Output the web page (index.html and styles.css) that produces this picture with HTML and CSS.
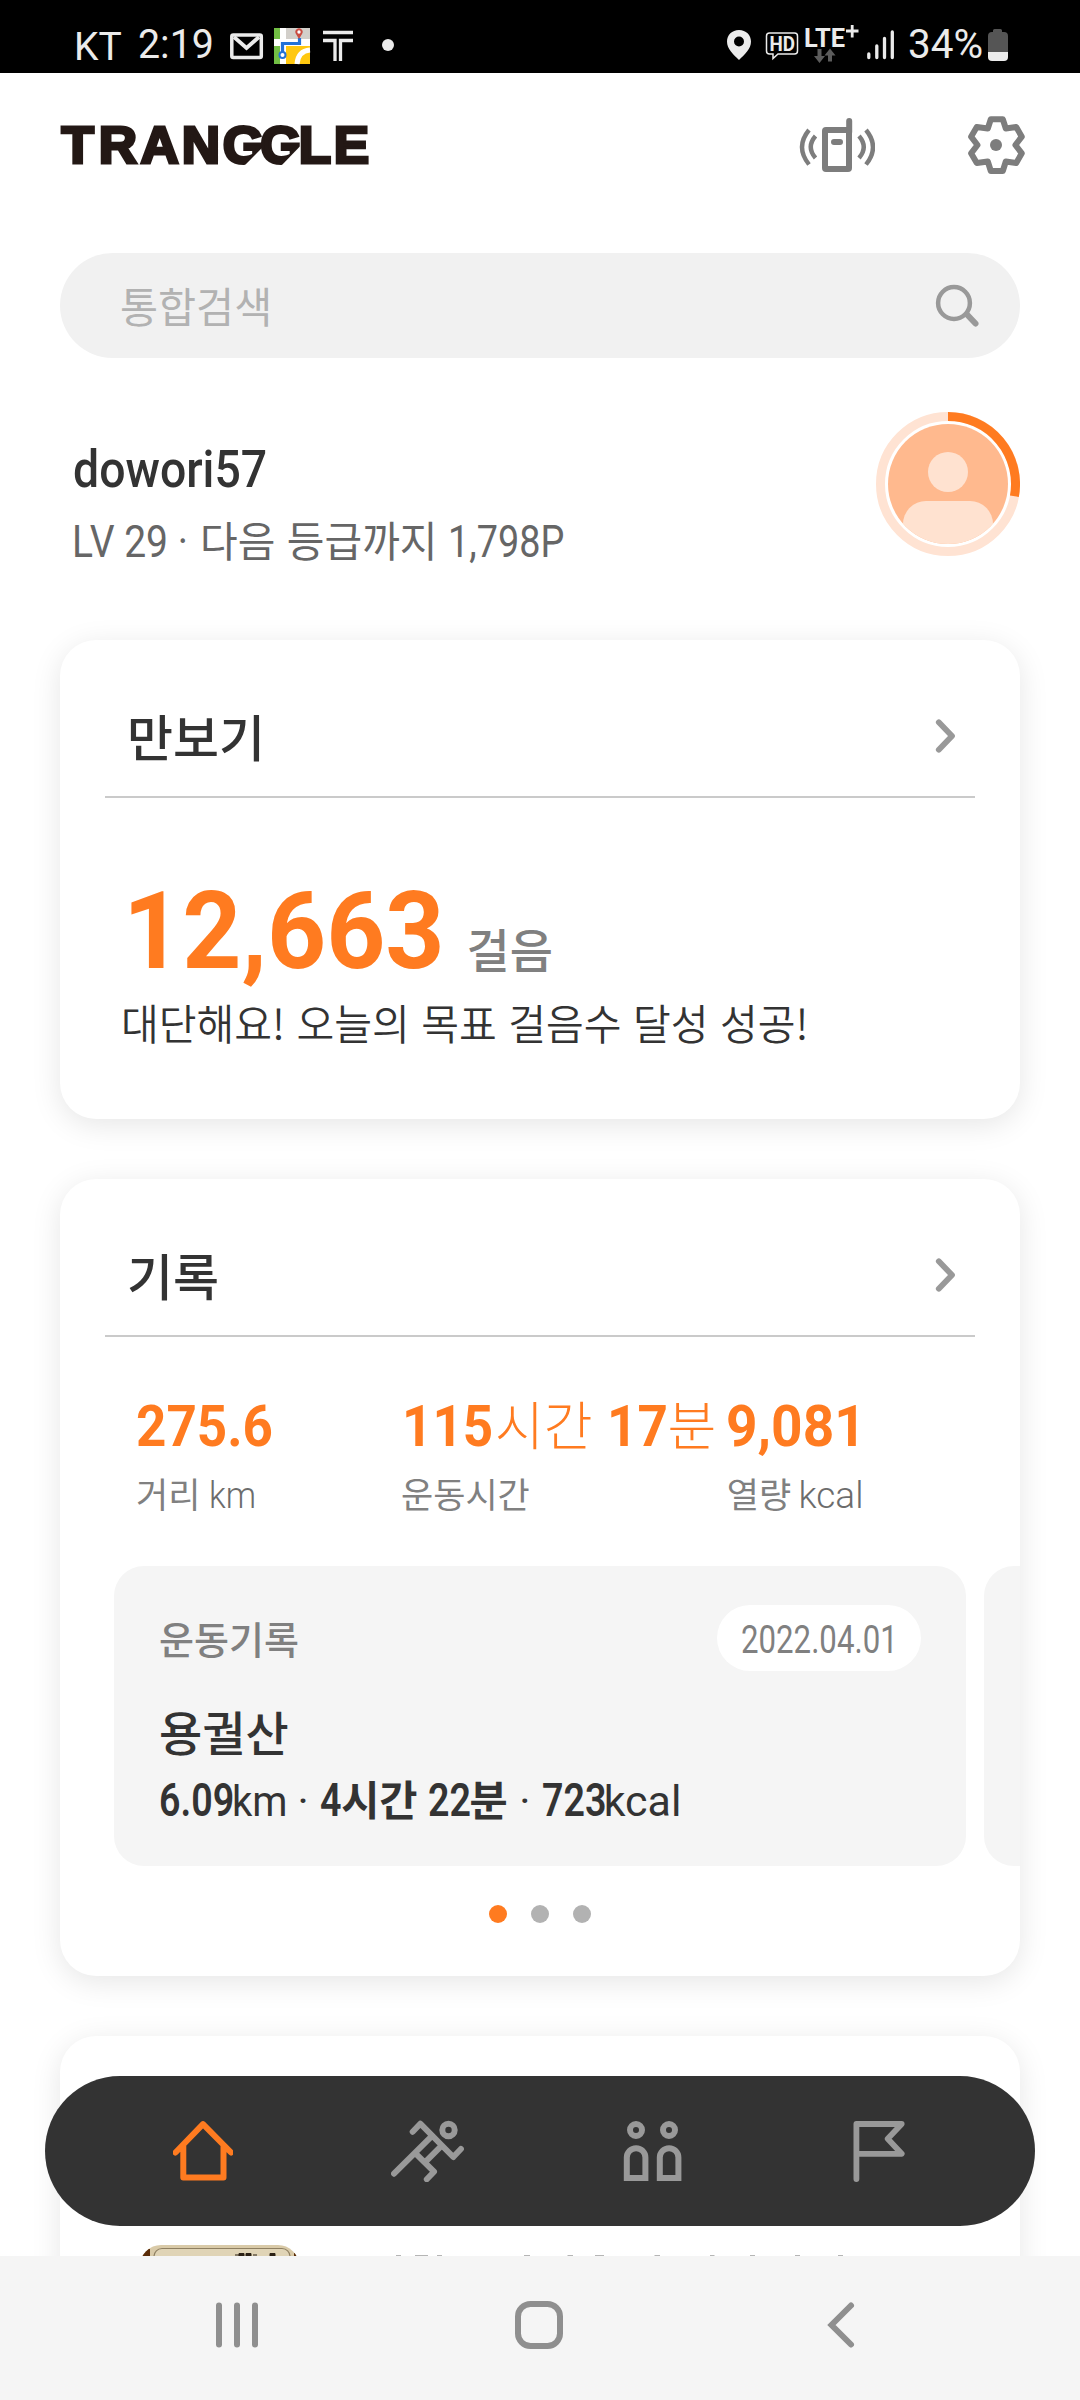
FILE: index.html
```html
<!DOCTYPE html>
<html lang="ko">
<head>
<meta charset="utf-8">
<title>TRANGGLE</title>
<link rel="stylesheet" href="styles.css">
</head>
<body>
<div class="phone">
  <header class="status">
    <span class="carrier">KT</span>
    <span class="clock">2:19</span>
    <svg class="notices" width="168" height="73" viewBox="228 0 168 73">
      <rect x="231.8" y="35" width="29.5" height="22.500" rx="1.500" fill="none" stroke="#ebebeb" stroke-width="3.500"/>
      <path d="M234 37l12.500 11L259 37" fill="none" stroke="#ebebeb" stroke-width="3.800"/>
      <g>
        <rect x="274" y="28" width="36" height="36" fill="#fff"/>
        <rect x="274" y="28" width="6" height="11" fill="#72bf44"/>
        <rect x="274" y="46" width="6" height="18" fill="#72bf44"/>
        <rect x="286" y="28" width="24" height="11" fill="#d2cfca"/>
        <path d="M286 46h24v18h-24z" fill="#ffc810"/>
        <path d="M297 64q1-13 13-14" fill="none" stroke="#fff" stroke-width="5"/>
        <path d="M282.500 54V43.500h17V38" fill="none" stroke="#2272d8" stroke-width="3.200"/>
        <circle cx="282.500" cy="55" r="3" fill="#fff" stroke="#2272d8" stroke-width="2"/>
        <path d="M299 39l-3-5a3.600 3.600 0 1 1 6 0z" fill="#c94b40"/>
        <circle cx="299" cy="32" r="1.700" fill="#fff"/>
      </g>
      <path d="M323 32.500h30M323 40.500h12v20.500M353 40.500h-12.500v20.500" fill="none" stroke="#ebebeb" stroke-width="3.300"/>
      <circle cx="388" cy="45" r="6" fill="#ebebeb"/>
    </svg>
    <svg class="signals" width="184" height="73" viewBox="724 0 184 73">
      <path d="M739 30c-7 0-12 5-12 11.500C727 49 733 54 739 60c6-6 12-11 12-18.500C751 35 746 30 739 30zm0 6.500a5 5 0 1 1 0 10 5 5 0 0 1 0-10z" fill="#ebebeb" fill-rule="evenodd"/>
      <path d="M769.500 33h25a3 3 0 0 1 3 3v15a3 3 0 0 1-3 3h-16.500l-5 4.500v-4.500h-3.500a3 3 0 0 1-3-3V36a3 3 0 0 1 3-3z" fill="none" stroke="#ebebeb" stroke-width="1.500"/>
      <text x="769.500" y="50.500" class="badge-hd" textLength="25.500" lengthAdjust="spacingAndGlyphs">HD</text>
      <text x="804" y="47" class="badge-lte" textLength="41" lengthAdjust="spacingAndGlyphs">LTE</text>
      <path d="M846 31h12.500M852.200 25v12.500" stroke="#ebebeb" stroke-width="2.800"/>
      <path d="M817.500 49h4v7h3.500l-5.500 7-5.500-7h3.500zM828 61.500v-6h-3.500l5.500-7 5.500 7H832v6z" fill="#5c5c5c"/>
      <path d="M868.800 54v3.500M876.800 46v11.500M884.500 38.500v19M892.300 32v25.500" stroke="#ebebeb" stroke-width="3.300" stroke-linecap="round"/>
    </svg>
    <span class="charge">34%</span>
    <svg width="22" height="73" viewBox="987 0 22 73">
      <path d="M993 32v-1.500a1.500 1.500 0 0 1 1.500-1.500h6a1.500 1.500 0 0 1 1.500 1.500V32h2a4 4 0 0 1 4 4v16h-20V36a4 4 0 0 1 4-4z" fill="#555"/>
      <path d="M988 52h20v5a4 4 0 0 1-4 4h-12a4 4 0 0 1-4-4z" fill="#ebebeb"/>
    </svg>
  </header>

  <main class="app">
    <div class="topbar">
      <svg class="logo" width="312" height="54" viewBox="0 0 312 54">
        <g transform="scale(1.04 1)">
          <text y="44.500" x="1.500 37.200 77.500 117">TRAN</text>
          <text y="44.500" x="156.500">G</text>
          <path d="M197 27L177 48h20z" fill="#fff"/>
          <text y="44.500" x="192.500">G</text>
          <path d="M232 27L212.500 48H232z" fill="#fff"/>
          <text y="44.500" x="229.500 263.200">LE</text>
        </g>
      </svg>
      <svg class="radio" width="76" height="58" viewBox="799 116 76 58">
        <g fill="none" stroke="#7d7d7d">
          <rect x="825" y="130" width="24" height="39" rx="1" stroke-width="6"/>
          <path d="M849.200 132v-11M834 142h6" stroke-width="6" stroke-linecap="round"/>
          <path d="M815.500 136q-9.500 11 0 22M859 136q9.500 11 0 22M809 130q-14 17 0 34.500M866 130q14 17 0 34.500" stroke-width="4.400"/>
        </g>
      </svg>
      <svg width="60" height="60" viewBox="966 115 60 60">
        <path d="M990.800 119.300h12l3 9.200 10.400-1.500 5.600 9.700-6.400 8.300 6.400 8.300-5.600 9.700-10.400-1.500-3 9.500h-12l-3-9.500-11 1.500-5.700-9.700 6.400-8.300-6.400-8.300 5.700-9.700 11 1.500z" fill="none" stroke="#7d7d7d" stroke-width="6" stroke-linejoin="round"/>
        <circle cx="996" cy="145" r="6" fill="#7d7d7d"/>
      </svg>
    </div>

    <div class="search">
      <span class="placeholder">통합검색</span>
      <svg width="46" height="46" viewBox="934 281 46 46">
        <g fill="none" stroke="#999" stroke-linecap="round">
          <circle cx="954" cy="302" r="15.900" stroke-width="4.500"/>
          <path d="M967 313.500l8.500 9" stroke-width="6"/>
        </g>
      </svg>
    </div>

    <section class="profile">
      <div>
        <div class="name">dowori57</div>
        <div class="level"><span class="lat">LV 29 ·</span><span class="next">다음 등급까지</span><span class="lat points">1,798P</span></div>
      </div>
      <svg width="144" height="144" viewBox="0 0 144 144">
        <defs><clipPath id="face"><circle cx="72" cy="72" r="60"/></clipPath></defs>
        <circle cx="72" cy="72" r="67.500" fill="none" stroke="#ffe3d3" stroke-width="9"/>
        <path d="M72 4.500A67.500 67.500 0 0 1 138.400 84.200" fill="none" stroke="#ff7b20" stroke-width="9"/>
        <g clip-path="url(#face)">
          <rect width="144" height="144" fill="#ffb98e"/>
          <circle cx="72" cy="60" r="20" fill="#ffe2d0"/>
          <path d="M27 144v-32a23 23 0 0 1 23-23h44a23 23 0 0 1 23 23v32z" fill="#ffe2d0"/>
        </g>
      </svg>
    </section>

    <section class="card card-steps">
      <div class="card-head">
        <h2>만보기</h2>
        <svg width="25" height="40" viewBox="0 -1 25 40"><path d="M5.800 6.300L19 20 5.800 33.700" class="chevron"/></svg>
      </div>
      <div class="steps"><span class="count">12,663</span><span class="unit">걸음</span></div>
      <p class="message">대단해요! 오늘의 목표 걸음수 달성 성공!</p>
    </section>

    <section class="card card-log">
      <div class="card-head">
        <h2>기록</h2>
        <svg width="25" height="40" viewBox="0 -1 25 40"><path d="M5.800 6.300L19 20 5.800 33.700" class="chevron"/></svg>
      </div>
      <div class="totals">
        <b>275.6</b><b>115</b><span>시간</span><b>17</b><span>분</span><b class="wide">9,081</b>
      </div>
      <div class="labels">
        <span>거리</span><span class="lat km">km</span><span>운동시간</span><span>열량</span><span class="lat">kcal</span>
      </div>
      <div class="carousel">
        <article class="record">
          <div class="record-head">
            <span class="kind">운동기록</span>
            <span class="date"><span>2022.04.01</span></span>
          </div>
          <h3>용궐산</h3>
          <div class="detail">
            <b>6.09</b><i class="km">km</i><i class="sep">·</i><b>4</b><strong>시간</strong><b>22</b><strong>분</strong><i class="sep">·</i><b>723</b><i>kcal</i>
          </div>
        </article>
        <article class="record"></article>
      </div>
      <div class="pager"><i class="on"></i><i></i><i></i></div>
    </section>

    <section class="card card-next">
      <svg width="159" height="90" viewBox="0 0 159 90">
        <defs><clipPath id="thumb"><rect width="159" height="90" rx="21"/></clipPath></defs>
        <g clip-path="url(#thumb)">
          <rect width="159" height="90" fill="#d9caa8"/>
          <path d="M0 4h10v86H0zM154 8h5v82h-5z" fill="#5a2c08"/>
          <rect x="14" y="3.500" width="136" height="100" rx="8" fill="#e0d4b6" stroke="#8f8062" stroke-width="1.200"/>
          <path d="M95 10h4M99 8.500h5v3h-5zM106 8.500h5v3h-5zM113 10h4M130 8.500h5v3h-5z" fill="#2b2115" stroke="#2b2115"/>
        </g>
      </svg>
      <svg class="peek" width="460" height="20" viewBox="390 2245 460 20">
        <path d="M396 2255.500h5M415 2255.500h13M437 2255.500h5M524 2255.500h6M567.500 2255.500h5.500M595 2255.500h9M654.500 2255.500h5.500M710 2255.500h4.500M750 2255.500h5M795 2255.500h5M838 2255.500h5" stroke="#b5b5b5" stroke-width="1.200"/>
      </svg>
    </section>

    <nav class="tabs">
      <svg width="60" height="62" viewBox="172.500 2120 60 62">
        <g fill="none" stroke="#ff7b20" stroke-width="6" stroke-linecap="round" stroke-linejoin="round">
          <path d="M175 2152.500l27.500-28.300 28 28.300M182.800 2146v31.500h40.200V2146"/>
        </g>
      </svg>
      <svg width="74" height="62" viewBox="390.500 2120 74 62">
        <g fill="none" stroke="#999" stroke-width="6" stroke-linecap="round" stroke-linejoin="round">
          <path d="M412.200 2131.700l7.600-8 33 33.300 7.600-8M430.800 2136.700l-37.300 37M440.400 2146.300l-15 15M415 2153.300l18.500 18.400-7.200 7.600"/>
          <circle cx="448" cy="2130" r="6.200"/>
        </g>
      </svg>
      <svg width="72" height="62" viewBox="622.500 2120 72 62">
        <g fill="none" stroke="#999" stroke-width="6">
          <circle cx="635.500" cy="2130" r="6"/><circle cx="668.500" cy="2130" r="6"/>
          <path d="M626.300 2178v-20.500a9.300 9.300 0 0 1 18.600 0V2178zM659.300 2178v-20.500a9.300 9.300 0 0 1 18.600 0V2178z"/>
        </g>
      </svg>
      <svg width="54" height="62" viewBox="852.500 2120 54 62">
        <path d="M855.900 2179V2124h45.300l-14 14.700 14 15.100h-45.300" fill="none" stroke="#999" stroke-width="5.800" stroke-linecap="round" stroke-linejoin="round"/>
      </svg>
    </nav>
  </main>

  <footer class="sysnav">
    <svg width="42" height="50" viewBox="0 0 42 50"><path d="M3 5.600v38.800M21 5.600v38.800M39 5.600v38.800" stroke="#8f8f8f" stroke-width="6" stroke-linecap="round"/></svg>
    <svg width="50" height="50" viewBox="0 0 50 50"><rect x="4" y="4" width="42" height="42" rx="12.500" fill="none" stroke="#8f8f8f" stroke-width="6"/></svg>
    <svg width="36" height="50" viewBox="-6 0 36 50"><path d="M25 5.500L5.500 25 25 44.500" fill="none" stroke="#8f8f8f" stroke-width="6" stroke-linecap="round"/></svg>
  </footer>
</div>
</body>
</html>
```
FILE: styles.css
```css
* { box-sizing: border-box; margin: 0; padding: 0; }
body { background: #fff; font-family: "Noto Sans CJK KR", sans-serif; color: #333; }
svg { display: block; flex: none; }
i { font-style: normal; }
.phone { width: 1080px; height: 2400px; display: flex; flex-direction: column; overflow: hidden; }

/* status bar */
.status { height: 73px; flex: none; background: #000; color: #ebebeb; display: flex; align-items: flex-start; padding-left: 74px; overflow: hidden; font-family: Roboto, sans-serif; white-space: nowrap; }
.carrier { width: 64px; font-size: 39px; line-height: 95px; }
.clock { width: 90px; font-size: 41px; line-height: 88px; transform: scaleX(.96); transform-origin: left; }
.signals { margin-left: 328px; }
.charge { width: 79px; font-size: 41px; line-height: 89px; transform: scaleX(.985); transform-origin: left; }
.badge-hd { font: 700 20px Roboto, sans-serif; fill: #ebebeb; }
.badge-lte { font: 700 25px Roboto, sans-serif; fill: #ebebeb; }

/* app */
.app { height: 2183px; flex: none; position: relative; overflow: hidden; }
.topbar { height: 144px; margin-bottom: 36px; padding: 0 54px 0 60px; display: flex; align-items: center; }
.logo { font: 700 51px "Liberation Sans", sans-serif; fill: #231815; overflow: visible; }
.logo text { stroke: #231815; stroke-width: 3px; }
.radio { margin: 0 91px 0 auto; }
.search { height: 105px; margin: 0 60px; padding: 0 40px 2px 59.5px; border-radius: 53px; background: #f1f1f1; display: flex; align-items: center; justify-content: space-between; }
.placeholder { font-size: 42px; line-height: 101px; color: #b2b2b2; transform: scaleX(.985); transform-origin: left; }

.profile { margin: 54px 60px 84px; height: 144px; display: flex; justify-content: space-between; }
.name { margin: 28px 0 0 12.5px; font: 500 52px/60px Roboto, sans-serif; transform: scaleX(.892); transform-origin: left; }
.level { margin: 9px 0 0 12px; height: 60px; display: grid; grid-template-columns: 128px 248px 120px; align-items: baseline; font-size: 42px; line-height: 60px; color: #666; white-space: nowrap; }
.level .lat { font-family: Roboto, sans-serif; font-size: 45px; transform: scaleX(.867); transform-origin: left; }
.level .next { transform: scaleX(.975); transform-origin: left; }
.level .points { transform: scaleX(.84); }

/* cards */
.card { margin: 0 60px 60px; border-radius: 36px; background: #fff; box-shadow: 0 6px 30px rgba(0, 0, 0, .1); overflow: hidden; }
.card-steps { height: 479px; }
.card-log { height: 797px; }
.card-next { height: 400px; padding: 209px 0 0 79.5px; display: flex; align-items: flex-start; }
.card-head { margin: 0 45px; height: 158px; padding: 59px 17px 25px 22px; border-bottom: 2px solid #cacaca; display: flex; align-items: center; justify-content: space-between; }
.card-head h2 { font-size: 50px; line-height: 72px; font-weight: 500; }
.chevron { fill: none; stroke: #999; stroke-width: 5.8px; stroke-linecap: round; stroke-linejoin: round; }

.steps { margin: 79px 0 0 62.5px; height: 110px; display: grid; grid-template-columns: 344px 1fr; align-items: baseline; line-height: 110px; white-space: nowrap; }
.count { font-family: Roboto, sans-serif; font-size: 107px; font-weight: 700; color: #ff7b20; transform: scaleX(.965); transform-origin: left; }
.unit { font-size: 47px; font-weight: 500; color: #808080; }
.message { margin: 5px 0 0 60.7px; font-size: 41.8px; line-height: 60px; font-weight: 350; white-space: nowrap; transform: scaleX(.982); transform-origin: left; }

.totals { margin: 51px 0 0 75.7px; height: 70px; display: grid; grid-template-columns: 266.6px 92.7px 112px 60.5px 59px 1fr; align-items: baseline; line-height: 70px; color: #ff7b20; white-space: nowrap; }
.totals b { font-family: Roboto, sans-serif; font-size: 57px; font-weight: 700; transform: scaleX(.93); transform-origin: left; }
.totals .wide { transform: scaleX(.965); }
.totals span { font-size: 53px; font-weight: 300; }
.labels { margin: 10px 0 0 76px; height: 50px; display: grid; grid-template-columns: 73px 192px 325.7px 71.8px 1fr; align-items: baseline; font-size: 35px; line-height: 50px; color: #808080; white-space: nowrap; }
.labels .lat { font-family: Roboto, sans-serif; font-size: 37px; font-weight: 300; color: #6c6c6c; }
.labels .km { transform: scaleX(.925); transform-origin: left; }

.carousel { margin: 48px 0 0 54px; display: flex; gap: 18px; overflow: hidden; }
.record { width: 852px; height: 300px; flex: none; border-radius: 30px; background: #f5f5f5; padding: 39px 45px 0 45px; }
.record-head { display: flex; justify-content: space-between; height: 66px; }
.kind { font-size: 38px; line-height: 65px; font-weight: 500; color: #808080; }
.date { width: 204px; border-radius: 33px; background: #fff; padding-left: 23.7px; font: 400 39px/70px Roboto, sans-serif; color: #808080; }
.date span { display: block; transform: scaleX(.8); transform-origin: left; }
.record h3 { margin-top: 30px; font-size: 47px; line-height: 60px; font-weight: 500; }
.detail { margin-top: 12px; display: grid; grid-template-columns: 73px 54px 34.2px 21px 86.7px 41.5px 38.9px 33.4px 62px 1fr; align-items: baseline; line-height: 50px; white-space: nowrap; }
.detail b { font-family: Roboto, sans-serif; font-size: 47px; font-weight: 600; transform: scaleX(.8); transform-origin: left; }
.detail strong { font-size: 41.5px; font-weight: 700; }
.detail i { font-family: Roboto, sans-serif; font-size: 43px; font-weight: 400; }
.detail .km { transform: scaleX(.934); transform-origin: left; }
.detail .sep { text-align: center; }

.pager { margin-top: 39px; display: flex; justify-content: center; gap: 24px; }
.pager i { width: 18px; height: 18px; border-radius: 50%; background: #b2b2b2; }
.pager .on { background: #ff7b20; }
.peek { margin-left: 91.5px; }

/* floating tab bar over the feed */
.tabs { position: absolute; left: 45px; right: 45px; bottom: 30px; height: 150px; border-radius: 75px; background: #333; display: flex; align-items: center; gap: 158px; padding-left: 127.5px; }

/* system navigation */
.sysnav { height: 144px; flex: none; background: #f5f5f5; display: flex; align-items: center; gap: 256px; padding: 0 0 6px 216px; }
```
